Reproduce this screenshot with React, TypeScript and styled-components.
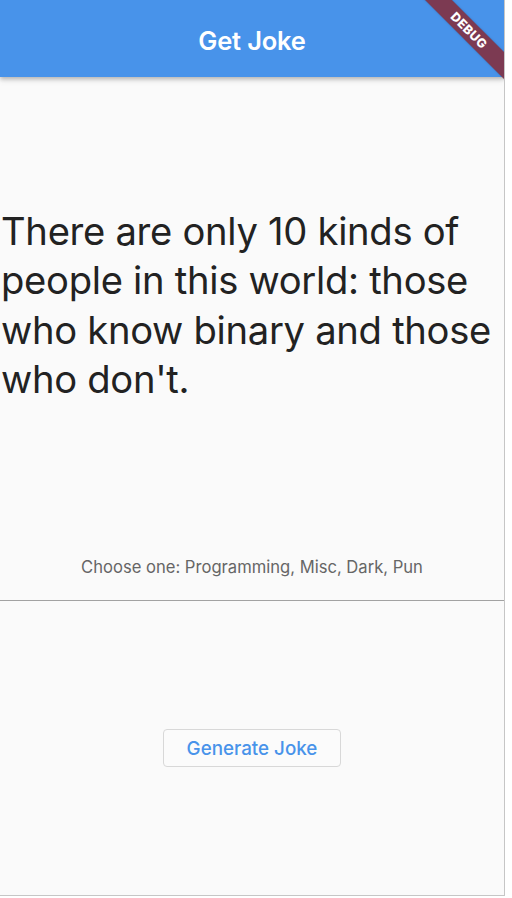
import React from "react";
import styled, { createGlobalStyle } from "styled-components";

const Global = createGlobalStyle`
  html, body { margin: 0; padding: 0; background: #ffffff; }
  body { font-family: Inter, "Noto Sans", "Liberation Sans", sans-serif; }
  * { box-sizing: border-box; }
`;

const Frame = styled.div`
  position: relative;
  width: 505px;
  height: 896px;
  background: #fafafa;
  border-right: 1px solid #c6c6c6;
  border-bottom: 1px solid #c6c6c6;
  display: flex;
  flex-direction: column;
  overflow: hidden;
`;

const AppBar = styled.header`
  height: 77px;
  flex: none;
  background: #4893ea;
  box-shadow: 0 2px 4px rgba(0, 0, 0, 0.22), 0 4px 6px rgba(0, 0, 0, 0.08);
  display: flex;
  align-items: center;
  justify-content: center;
  padding-top: 3px;
  position: relative;
  z-index: 1;
`;

const Title = styled.h1`
  margin: 0;
  color: #ffffff;
  font-size: 25.5px;
  font-weight: 600;
  letter-spacing: -0.2px;
`;

const JokeArea = styled.section`
  height: 468px;
  flex: none;
  display: flex;
  align-items: center;
  padding-bottom: 11px;
`;

const JokeText = styled.p`
  margin: 0;
  padding: 0 0 0 1px;
  font-size: 38.2px;
  line-height: 49.3px;
  color: #222222;
  font-weight: 400;
  letter-spacing: -0.3px;
`;

const Hint = styled.p`
  margin: 0;
  height: 55px;
  flex: none;
  display: flex;
  align-items: flex-start;
  justify-content: center;
  padding-top: 12px;
  font-size: 16.6px;
  color: #666666;
`;

const Divider = styled.hr`
  margin: 0;
  border: none;
  height: 1px;
  background: #a2a2a2;
  flex: none;
`;

const ButtonArea = styled.section`
  flex: 1;
  display: flex;
  align-items: center;
  justify-content: center;
`;

const OutlineButton = styled.button`
  width: 178px;
  height: 38px;
  border: 1px solid #d8d8d8;
  border-radius: 4px;
  background: #fbfbfb;
  color: #4893ea;
  font-family: inherit;
  font-size: 18.8px;
  font-weight: 500;
  cursor: pointer;
`;

const BannerClip = styled.div`
  position: absolute;
  top: 0;
  right: 0;
  width: 100px;
  height: 100px;
  overflow: hidden;
  pointer-events: none;
  z-index: 2;
`;

const Ribbon = styled.div`
  position: absolute;
  left: -15px;
  top: 21px;
  width: 160px;
  height: 19px;
  background: #7c3a52;
  transform: rotate(45deg);
  display: flex;
  align-items: center;
  justify-content: center;
  color: #ffffff;
  font-size: 12.5px;
  font-weight: 800;
  letter-spacing: 0.4px;
  box-shadow: 0 0 2px rgba(0, 0, 0, 0.25);
`;

export default function App() {
  return (
    <>
      <Global />
      <Frame>
        <AppBar>
          <Title>Get Joke</Title>
        </AppBar>
        <JokeArea>
          <JokeText>
            There are only 10 kinds of people in this world: those who know
            binary and those who don't.
          </JokeText>
        </JokeArea>
        <Hint>Choose one: Programming, Misc, Dark, Pun</Hint>
        <Divider />
        <ButtonArea>
          <OutlineButton>Generate Joke</OutlineButton>
        </ButtonArea>
        <BannerClip>
          <Ribbon>DEBUG</Ribbon>
        </BannerClip>
      </Frame>
    </>
  );
}
